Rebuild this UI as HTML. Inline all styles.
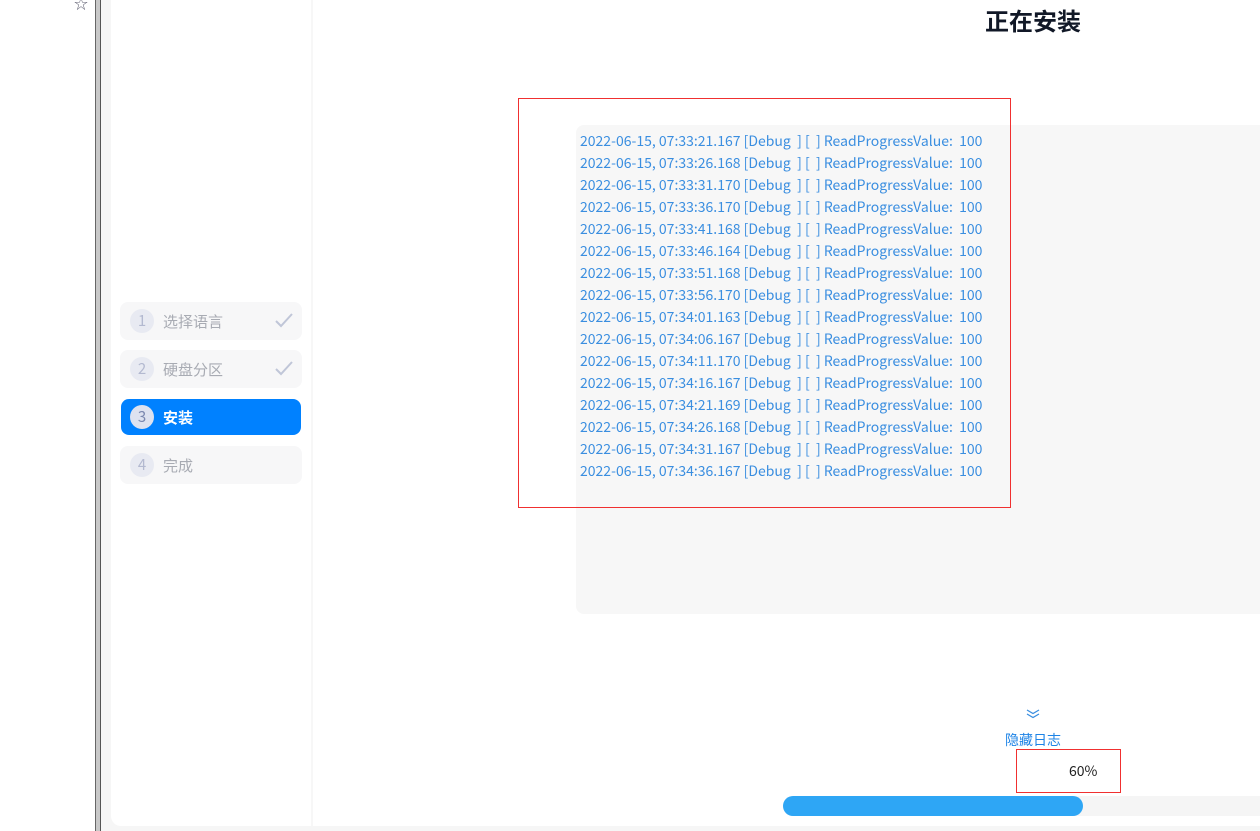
<!DOCTYPE html>
<html><head><meta charset="utf-8"><style>
*{margin:0;padding:0;box-sizing:border-box}
body{width:1260px;height:831px;overflow:hidden;background:#fff;position:relative;font-family:"Liberation Sans","Noto Sans CJK SC",sans-serif}
.abs{position:absolute}
.step{position:absolute;left:120px;width:182px;height:38px;border-radius:8px;background:#f7f7f8;font-family:"Noto Sans CJK SC",sans-serif;font-size:15px;color:#a8abb3}
.step .n{position:absolute;left:10px;top:7px;width:24px;height:24px;border-radius:12px;background:#e8eaf2;color:#b3b9d0;text-align:center;line-height:24px;font-size:15px}
.step .t{position:absolute;left:43px;top:9px;line-height:22px}
.step .c{position:absolute;right:9px;top:11px}
.log{font-family:"Noto Sans CJK SC",sans-serif;font-size:14px;color:#3a8ee0;line-height:22px;white-space:pre}
</style></head><body>
<div class="abs" style="left:74px;top:-6px;font-size:14px;color:#667">☆</div>
<div class="abs" style="left:95px;top:0;width:6px;height:831px;background:#c8c8c8;border-left:1px solid #666;border-right:1px solid #555"></div>
<div class="abs" style="left:101px;top:0;width:1159px;height:831px;background:#f6f6f6"></div>
<div class="abs" style="left:111px;top:0;width:1149px;height:826px;background:#fff;border-bottom-left-radius:10px"></div>
<div class="abs" style="left:311px;top:0;width:2px;height:826px;background:#f7f7f7"></div>

<div class="step" style="top:302px"><div class="n">1</div><div class="t">选择语言</div><svg class="c" width="18" height="16" viewBox="0 0 18 16"><path d="M1 8l5 5 11-12" fill="none" stroke="#c0c6d8" stroke-width="2"/></svg></div>
<div class="step" style="top:350px"><div class="n">2</div><div class="t">硬盘分区</div><svg class="c" width="18" height="16" viewBox="0 0 18 16"><path d="M1 8l5 5 11-12" fill="none" stroke="#c0c6d8" stroke-width="2"/></svg></div>
<div class="step" style="top:399px;left:121px;width:180px;height:36px;background:#0081ff;color:#fff;font-weight:bold"><div class="n" style="top:6px;left:9px;background:#dde2f0;color:#7a88b0;font-weight:normal">3</div><div class="t" style="top:8px;left:42px">安装</div></div>
<div class="step" style="top:446px"><div class="n">4</div><div class="t">完成</div></div>

<div class="abs" style="left:985px;top:4px;font-family:'Noto Sans CJK SC',sans-serif;font-size:24px;font-weight:bold;color:#111827;line-height:32px">正在安装</div>

<div class="abs" style="left:576px;top:125px;width:700px;height:489px;background:#f7f7f7;border-radius:8px"></div>
<div class="abs log" style="left:580px;top:130px">2022-06-15, 07:33:21.167 [Debug  ] [  ] ReadProgressValue:  100
2022-06-15, 07:33:26.168 [Debug  ] [  ] ReadProgressValue:  100
2022-06-15, 07:33:31.170 [Debug  ] [  ] ReadProgressValue:  100
2022-06-15, 07:33:36.170 [Debug  ] [  ] ReadProgressValue:  100
2022-06-15, 07:33:41.168 [Debug  ] [  ] ReadProgressValue:  100
2022-06-15, 07:33:46.164 [Debug  ] [  ] ReadProgressValue:  100
2022-06-15, 07:33:51.168 [Debug  ] [  ] ReadProgressValue:  100
2022-06-15, 07:33:56.170 [Debug  ] [  ] ReadProgressValue:  100
2022-06-15, 07:34:01.163 [Debug  ] [  ] ReadProgressValue:  100
2022-06-15, 07:34:06.167 [Debug  ] [  ] ReadProgressValue:  100
2022-06-15, 07:34:11.170 [Debug  ] [  ] ReadProgressValue:  100
2022-06-15, 07:34:16.167 [Debug  ] [  ] ReadProgressValue:  100
2022-06-15, 07:34:21.169 [Debug  ] [  ] ReadProgressValue:  100
2022-06-15, 07:34:26.168 [Debug  ] [  ] ReadProgressValue:  100
2022-06-15, 07:34:31.167 [Debug  ] [  ] ReadProgressValue:  100
2022-06-15, 07:34:36.167 [Debug  ] [  ] ReadProgressValue:  100</div>
<div class="abs" style="left:518px;top:98px;width:493px;height:410px;border:1px solid #f03030"></div>

<svg class="abs" style="left:1025px;top:709px" width="16" height="10" viewBox="0 0 16 10"><path d="M2 1l6 3.5 6-3.5M2 5l6 3.5 6-3.5" fill="none" stroke="#3a8ee0" stroke-width="1.3"/></svg>
<div class="abs" style="left:1005px;top:730px;font-family:'Noto Sans CJK SC',sans-serif;font-size:14px;color:#1d83e6;line-height:20px">隐藏日志</div>
<div class="abs" style="left:1016px;top:749px;width:105px;height:44px;border:1px solid #f03030"></div>
<div class="abs" style="left:1069px;top:761px;font-family:'Noto Sans CJK SC',sans-serif;font-size:14px;color:#222;line-height:20px">60%</div>
<div class="abs" style="left:783px;top:796px;width:480px;height:20px;background:#f5f5f5;border-radius:10px 0 0 10px"></div>
<div class="abs" style="left:783px;top:796px;width:300px;height:20px;background:#2ea6f5;border-radius:10px"></div>
</body></html>
